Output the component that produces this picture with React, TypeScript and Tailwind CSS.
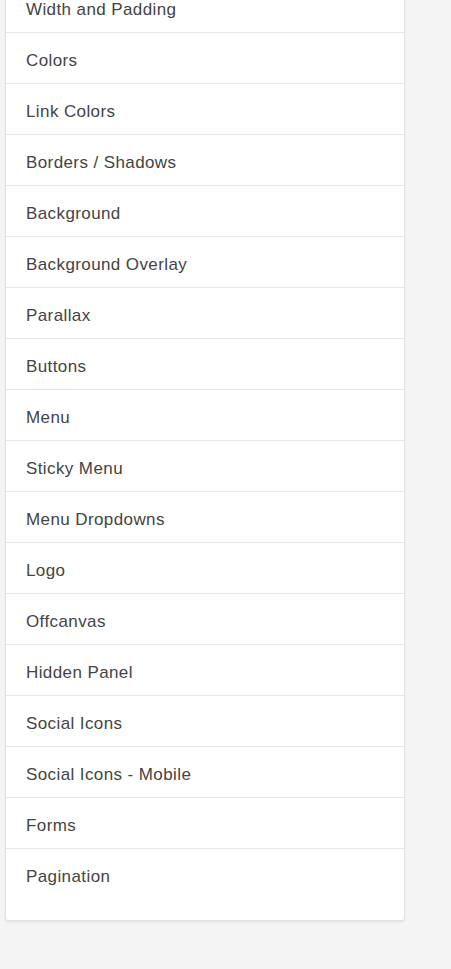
import React from "react";

const items = [
  "Width and Padding",
  "Colors",
  "Link Colors",
  "Borders / Shadows",
  "Background",
  "Background Overlay",
  "Parallax",
  "Buttons",
  "Menu",
  "Sticky Menu",
  "Menu Dropdowns",
  "Logo",
  "Offcanvas",
  "Hidden Panel",
  "Social Icons",
  "Social Icons - Mobile",
  "Forms",
  "Pagination",
];

export default function App() {
  return (
    <div
      className="min-h-screen w-full overflow-hidden bg-[#f4f4f4]"
      style={{ fontFamily: '"Liberation Sans", Arial, sans-serif' }}
    >
      <div className="ml-[5px] mt-[-19px] w-[400px] rounded-[3px] border border-[#e2e2e2] bg-white shadow-[0_1px_2px_rgba(0,0,0,0.08)]">
        <ul>
          {items.map((label, i) => {
            const last = i === items.length - 1;
            return (
              <li
                key={label}
                className={
                  last
                    ? "px-5 pt-[18px] pb-[33px] text-[17px] leading-5 tracking-[0.4px] text-[#444]"
                    : "h-[51px] border-b border-[#e5e5e5] px-5 pt-[18px] text-[17px] leading-5 tracking-[0.4px] text-[#444]"
                }
              >
                {label}
              </li>
            );
          })}
        </ul>
      </div>
    </div>
  );
}
